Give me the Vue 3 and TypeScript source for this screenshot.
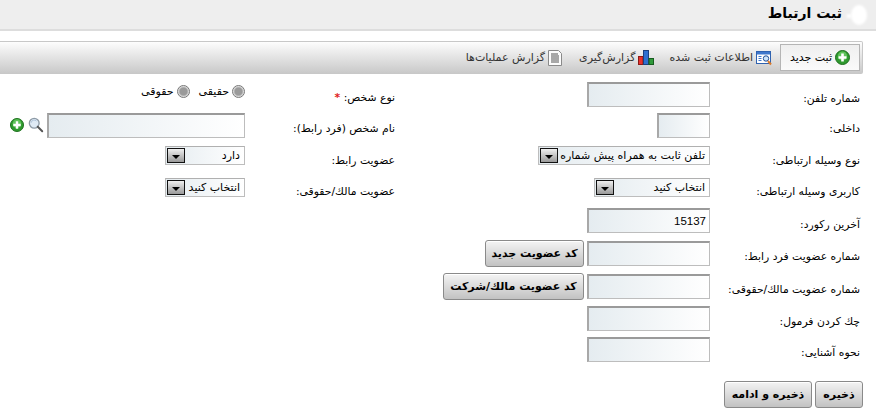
<script setup lang="ts">
type Field =
  | { kind: 'input'; width: number; value?: string; button?: string; buttonWidth?: number }
  | { kind: 'select'; width: number; value: string }
  | { kind: 'radios' }
  | { kind: 'search' }

interface Cell {
  label: string
  required?: boolean
  labelTop: number
  field: Field
}

interface Row {
  main: Cell
  side?: Cell
}

const rows: Row[] = [
  {
    main: { label: 'شماره تلفن:', labelTop: 10, field: { kind: 'input', width: 123 } },
    side: { label: 'نوع شخص:', required: true, labelTop: 9, field: { kind: 'radios' } },
  },
  {
    main: { label: 'داخلی:', labelTop: 9, field: { kind: 'input', width: 53 } },
    side: { label: 'نام شخص (فرد رابط):', labelTop: 9, field: { kind: 'search' } },
  },
  {
    main: { label: 'نوع وسیله ارتباطی:', labelTop: 8, field: { kind: 'select', width: 172, value: 'تلفن ثابت به همراه پیش شماره' } },
    side: { label: 'عضویت رابط:', labelTop: 8, field: { kind: 'select', width: 80, value: 'دارد' } },
  },
  {
    main: { label: 'کاربری وسیله ارتباطی:', labelTop: 7, field: { kind: 'select', width: 116, value: 'انتخاب کنید' } },
    side: { label: 'عضویت مالك/حقوقی:', labelTop: 7, field: { kind: 'select', width: 80, value: 'انتخاب کنید' } },
  },
  { main: { label: 'آخرین رکورد:', labelTop: 10, field: { kind: 'input', width: 123, value: '15137' } } },
  { main: { label: 'شماره عضویت فرد رابط:', labelTop: 9, field: { kind: 'input', width: 123, button: 'کد عضویت جدید', buttonWidth: 99 } } },
  { main: { label: 'شماره عضویت مالك/حقوقی:', labelTop: 9, field: { kind: 'input', width: 123, button: 'کد عضویت مالك/شرکت', buttonWidth: 141 } } },
  { main: { label: 'چك كردن فرمول:', labelTop: 9, field: { kind: 'input', width: 123 } } },
  { main: { label: 'نحوه آشنایی:', labelTop: 9, field: { kind: 'input', width: 123 } } },
]

function cells(row: Row): Array<{ cell: Cell; cls: string }> {
  const out = [{ cell: row.main, cls: 'main' }]
  if (row.side) out.push({ cell: row.side, cls: 'side' })
  return out
}
</script>

<template>
  <div class="page">
    <header class="title-bar">
      <svg class="blob" width="24" height="26" viewBox="0 0 24 26" aria-hidden="true">
        <defs>
          <filter id="soft" x="-20%" y="-20%" width="140%" height="140%"><feGaussianBlur stdDeviation="1.200" /></filter>
        </defs>
        <ellipse cx="14" cy="13" rx="8" ry="10" fill="#fff" filter="url(#soft)" />
        <ellipse cx="4" cy="14" rx="2.500" ry="2" fill="#fff" filter="url(#soft)" />
      </svg>
      <h1>ثبت ارتباط</h1>
    </header>

    <nav class="toolbar">
      <a class="tab active">
        <svg width="15" height="15" viewBox="0 0 15 15" aria-hidden="true">
          <circle cx="7.500" cy="7.500" r="7" fill="#2f9a2f" stroke="#1c6e1c" />
          <circle cx="7.500" cy="6" r="4.600" fill="#5fc25a" />
          <path d="M6.200 3.500h2.600v2.700h2.700v2.600H8.800v2.700H6.200V8.800H3.500V6.200h2.700z" fill="#fff" />
        </svg>
        <span>ثبت جدید</span>
      </a>
      <a class="tab t2">
        <svg width="17" height="16" viewBox="0 0 17 16" aria-hidden="true">
          <rect x="0.500" y="1.500" width="14" height="12" fill="#fff" stroke="#2f62b0" />
          <rect x="1" y="2" width="13" height="2.500" fill="#3f78cc" />
          <path d="M2.500 6.500h3M2.500 8.500h3M2.500 10.500h3" stroke="#3f78cc" />
          <circle cx="10" cy="8.500" r="2.700" fill="#cfe6fa" stroke="#234f96" />
          <path d="M12 11l3 3.500" stroke="#d9782a" stroke-width="2" />
        </svg>
        <span>اطلاعات ثبت شده</span>
      </a>
      <a class="tab t3">
        <svg width="16" height="15" viewBox="0 0 16 15" aria-hidden="true">
          <rect x="0.500" y="6.500" width="4.500" height="8" fill="#e8322c" stroke="#8c1a16" />
          <rect x="5.500" y="0.500" width="5" height="14" fill="#2f6fd0" stroke="#1c3f80" />
          <rect x="11" y="8.500" width="4.500" height="6" fill="#2f9a3a" stroke="#175c1f" />
        </svg>
        <span>گزارش‌گیری</span>
      </a>
      <a class="tab t4">
        <svg width="14" height="16" viewBox="0 0 14 16" aria-hidden="true">
          <path d="M0.500 0.500h10l3 3v12H0.500z" fill="#fbfbfb" stroke="#8a8a8a" />
          <path d="M3 4h7M3 6h8M3 8h8M3 10h8M3 12h8" stroke="#555" />
        </svg>
        <span>گزارش عملیات‌ها</span>
      </a>
    </nav>

    <form class="form" @submit.prevent>
      <template v-for="(row, r) in rows" :key="r">
        <template v-for="{ cell, cls } in cells(row)" :key="cls">
          <label class="label" :class="cls" :style="{ paddingTop: cell.labelTop + 'px' }">
            {{ cell.label }}
            <span v-if="cell.required" class="req">*</span>
          </label>
          <div class="field">
            <template v-if="cell.field.kind === 'input'">
              <input class="text" type="text" :value="cell.field.value" :style="{ width: cell.field.width + 'px' }" />
              <button v-if="cell.field.button" type="button" class="btn tall" :style="{ width: cell.field.buttonWidth + 'px' }">{{ cell.field.button }}</button>
            </template>
            <div v-else-if="cell.field.kind === 'select'" class="select" :style="{ width: cell.field.width + 'px' }">
              <span class="select-text">{{ cell.field.value }}</span>
              <span class="arrow"><i></i></span>
            </div>
            <div v-else-if="cell.field.kind === 'radios'" class="radios">
              <span class="radio"></span><span class="radio-text">حقیقی</span>
              <span class="radio second"></span><span class="radio-text">حقوقی</span>
            </div>
            <template v-else>
              <input class="text search" type="text" />
              <svg class="mag" width="16" height="16" viewBox="0 0 18 17" aria-hidden="true">
                <circle cx="7" cy="6.500" r="5.500" fill="#dfeaf5" stroke="#8d9aa6" stroke-width="1.500" />
                <path d="M3.500 6a3.500 3.500 0 0 1 6-2" fill="none" stroke="#a9bfd6" />
                <path d="M11 10.500l5 5" stroke="#555" stroke-width="2.200" stroke-linecap="round" />
              </svg>
              <svg class="add" width="14" height="14" viewBox="0 0 15 15" aria-hidden="true">
                <circle cx="7.500" cy="7.500" r="7" fill="#2f9a2f" stroke="#1c6e1c" />
                <circle cx="7.500" cy="6" r="4.600" fill="#5fc25a" />
                <path d="M6.200 3.500h2.600v2.700h2.700v2.600H8.800v2.700H6.200V8.800H3.500V6.200h2.700z" fill="#fff" />
              </svg>
            </template>
          </div>
        </template>
      </template>
    </form>

    <div class="actions">
      <button type="button" class="btn save">ذخیره</button>
      <button type="button" class="btn save-next">ذخیره و ادامه</button>
    </div>
  </div>
</template>

<style>
html, body { margin: 0; background: #fff; }
</style>

<style scoped>
.page {
  width: 876px;
  height: 414px;
  overflow: hidden;
  direction: rtl;
  font-family: "DejaVu Sans", Tahoma, sans-serif;
  font-size: 10.8px;
  color: #111;
  background: #fff;
}
.title-bar {
  height: 29px;
  background: #eeeeee;
  border-bottom: 2px solid #dddddd;
  display: flex;
  align-items: center;
  padding-right: 7px;
  gap: 3px;
}
.blob { margin-top: 1px; }
.title-bar h1 {
  margin: -3px 0 0;
  font-size: 14px;
  font-weight: bold;
  color: #000;
}
.toolbar {
  margin: 10px 13px 0 0;
  height: 33px;
  box-sizing: border-box;
  border: 1px solid #c8c8c8;
  border-left: 0;
  border-radius: 0 2px 2px 0;
  background: linear-gradient(to bottom, #fdfdfd, #c9c9c9);
  display: flex;
  align-items: center;
  padding-right: 2px;
}
.tab {
  display: flex;
  align-items: center;
  gap: 3px;
  color: #333;
  white-space: nowrap;
  font-size: 11px;
}
.tab.active {
  box-sizing: border-box;
  width: 80px;
  height: 27px;
  border: 1px solid #b5b5b5;
  background: linear-gradient(to bottom, #efefef, #fafafa);
  padding-right: 9px;
  color: #000;
}
.t2 { margin-right: 7px; }
.t3 { margin-right: 15px; }
.t4 { margin-right: 17px; }
.form {
  margin-top: 8px;
  padding-right: 16px;
  display: grid;
  grid-template-columns: 150px 315px 150px 245px;
  grid-template-rows: 31px 33px 32px 30px 33px 33px 32px 31px 25px;
}
.label {
  grid-column: 1;
  line-height: 13px;
  white-space: nowrap;
  color: #000;
}
.label.side { grid-column: 3; }
.req { color: #e02020; font-weight: bold; }
.field {
  display: flex;
  align-items: flex-start;
  gap: 3px;
}
.text {
  box-sizing: border-box;
  height: 25px;
  margin: 0;
  padding: 2px 3px;
  border: 1px solid #bdbdbd;
  border-top: 2px solid #9a9a9a;
  border-left: 2px solid #a8a8a8;
  background: linear-gradient(to right, #e5ecf0, #ffffff);
  font: 11.500px "Liberation Sans", sans-serif;
  color: #000;
  direction: rtl;
  outline: none;
}
.search { width: 198px; }
.mag { margin: 4px 0 0 0; }
.add { margin: 5px 1px 0 0; }
.select {
  box-sizing: border-box;
  height: 19px;
  border: 1px solid #bdbdbd;
  border-top-color: #b0b0b0;
  background: linear-gradient(to right, #e5ecf0, #ffffff);
  display: flex;
  align-items: center;
  justify-content: space-between;
  padding: 0 4px 0 1px;
}
.select-text { white-space: nowrap; color: #000; font-size: 11px; }
.arrow {
  box-sizing: border-box;
  width: 18px;
  height: 15px;
  border: 1px solid #111;
  background: linear-gradient(to bottom, #efefef, #9a9a9a);
  display: flex;
  align-items: center;
  justify-content: center;
}
.arrow i {
  width: 0;
  height: 0;
  border-left: 4px solid transparent;
  border-right: 4px solid transparent;
  border-top: 4px solid #000;
  margin-top: 2px;
}
.radios {
  display: flex;
  align-items: center;
  height: 14px;
  margin-top: 2px;
  gap: 3px;
}
.radio {
  width: 11px;
  height: 11px;
  border-radius: 50%;
  border: 1px solid #777;
  background: radial-gradient(circle at 50% 50%, #9a9a9a 0 45%, #e8e8e8 70%);
}
.radio.second { margin-right: 6px; }
.radio-text { color: #000; font-size: 11px; }
.btn {
  box-sizing: border-box;
  height: 27px;
  margin: 0;
  padding: 0;
  border: 1px solid #8a8a8a;
  border-radius: 3px;
  background: linear-gradient(to bottom, #f4f4f4, #c2c2c2);
  box-shadow: inset 0 1px 0 #fff;
  font: bold 11px "DejaVu Sans", sans-serif;
  color: #000;
  white-space: nowrap;
  cursor: pointer;
}
.tall { margin-top: -1px; }
.actions {
  margin-top: 19px;
  padding-right: 13px;
  display: flex;
  gap: 3px;
}
.save { width: 48px; }
.save-next { width: 88px; }
</style>
